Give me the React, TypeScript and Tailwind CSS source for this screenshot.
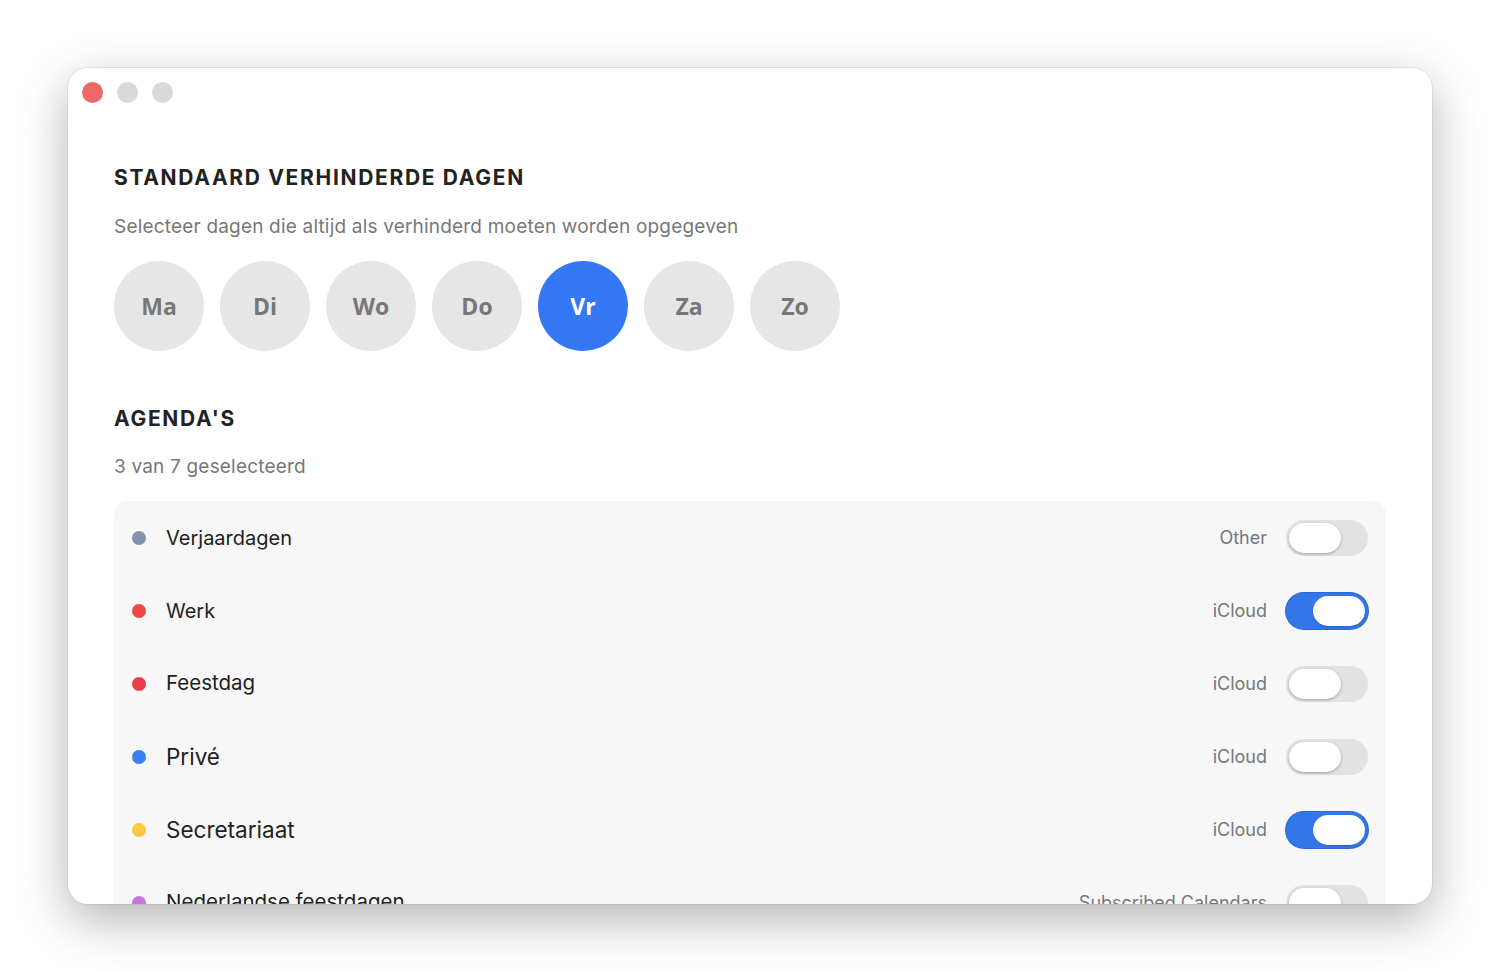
import React, { useState } from 'react';

type Agenda = {
    name: string;
    source: string;
    color: string;
    size: string;
    on: boolean;
};

const DAYS = ['Ma', 'Di', 'Wo', 'Do', 'Vr', 'Za', 'Zo'];

const AGENDAS: Agenda[] = [
    { name: 'Verjaardagen', source: 'Other', color: 'bg-[#8492ad]', size: 'text-[20px]', on: false },
    { name: 'Werk', source: 'iCloud', color: 'bg-[#ea4a45]', size: 'text-[20px]', on: true },
    { name: 'Feestdag', source: 'iCloud', color: 'bg-[#e9404f]', size: 'text-[20.5px]', on: false },
    { name: 'Privé', source: 'iCloud', color: 'bg-[#3580f5]', size: 'text-[22.5px]', on: false },
    { name: 'Secretariaat', source: 'iCloud', color: 'bg-[#f9ca3f]', size: 'text-[22.5px]', on: true },
    { name: 'Nederlandse feestdagen', source: 'Subscribed Calendars', color: 'bg-[#c474dd]', size: 'text-[20.5px]', on: false },
];

const Toggle: React.FC<{ on: boolean; onChange: () => void }> = ({ on, onChange }) => (
    <button
        onClick={onChange}
        className={`flex h-[36px] w-[82px] shrink-0 items-center rounded-full px-[3px] ${on ? 'justify-end bg-[#3276ea] ring-1 ring-[#2a68d8]' : 'justify-start bg-[#e2e2e2]'}`}
    >
        <span className={`h-[30px] w-[52px] rounded-full bg-white ${on ? 'shadow-[0_1px_2px_rgba(0,0,0,0.2)]' : 'shadow-[0_1px_3px_rgba(0,0,0,0.3)]'}`} />
    </button>
);

export default function App() {
    const [blocked, setBlocked] = useState<string[]>(['Vr']);
    const [agendas, setAgendas] = useState(AGENDAS);

    const toggleDay = (d: string) =>
        setBlocked(prev => (prev.includes(d) ? prev.filter(x => x !== d) : [...prev, d]));

    const toggleAgenda = (i: number) =>
        setAgendas(prev => prev.map((a, j) => (j === i ? { ...a, on: !a.on } : a)));

    return (
        <div className="min-h-screen bg-white p-[68px] font-['Inter',sans-serif]">
            <div className="h-[836px] w-[1364px] overflow-hidden rounded-[20px] bg-white shadow-[0_16px_50px_rgba(0,0,0,0.3),0_0_0_1px_rgba(0,0,0,0.06)]">
                {/* traffic lights */}
                <div className="flex gap-[14px] pl-[14px] pt-[14px]">
                    <span className="h-[21px] w-[21px] rounded-full bg-[#ee6a6a]" />
                    <span className="h-[21px] w-[21px] rounded-full bg-[#d9d9d9]" />
                    <span className="h-[21px] w-[21px] rounded-full bg-[#d9d9d9]" />
                </div>

                <div className="px-[46px] pt-[61px]">
                    <h2 className="text-[21px] font-bold leading-[28px] tracking-[0.08em] text-[#222]">STANDAARD VERHINDERDE DAGEN</h2>
                    <p className="mt-[22px] text-[19px] leading-[26px] tracking-[0.01em] text-[#787878]">Selecteer dagen die altijd als verhinderd moeten worden opgegeven</p>

                    <div className="mt-[21px] flex gap-[16px]">
                        {DAYS.map(d => {
                            const active = blocked.includes(d);
                            return (
                                <button
                                    key={d}
                                    onClick={() => toggleDay(d)}
                                    className={`flex h-[90px] w-[90px] items-center justify-center rounded-full font-['Open_Sans',sans-serif] text-[23px] font-bold ${active ? 'bg-[#3478f6] text-white' : 'bg-[#e6e6e6] text-[#777]'}`}
                                >
                                    {d}
                                </button>
                            );
                        })}
                    </div>

                    <h2 className="mt-[54px] text-[21px] font-bold leading-[28px] tracking-[0.08em] text-[#222]">AGENDA'S</h2>
                    <p className="mt-[21px] text-[19px] leading-[26px] tracking-[0.01em] text-[#787878]">3 van 7 geselecteerd</p>

                    <div className="mt-[21px] rounded-[14px] bg-[#f7f7f7] pl-[18px] pr-[18px]">
                        {agendas.map((a, i) => (
                            <div key={a.name} className="flex h-[73px] items-center">
                                <span className={`h-[14px] w-[14px] shrink-0 rounded-full ${a.color}`} />
                                <span className={`ml-[20px] text-[#222] ${a.size}`}>{a.name}</span>
                                <span className="ml-auto mr-[19px] text-[18px] text-[#777]">{a.source}</span>
                                <Toggle on={a.on} onChange={() => toggleAgenda(i)} />
                            </div>
                        ))}
                    </div>
                </div>
            </div>
        </div>
    );
}
